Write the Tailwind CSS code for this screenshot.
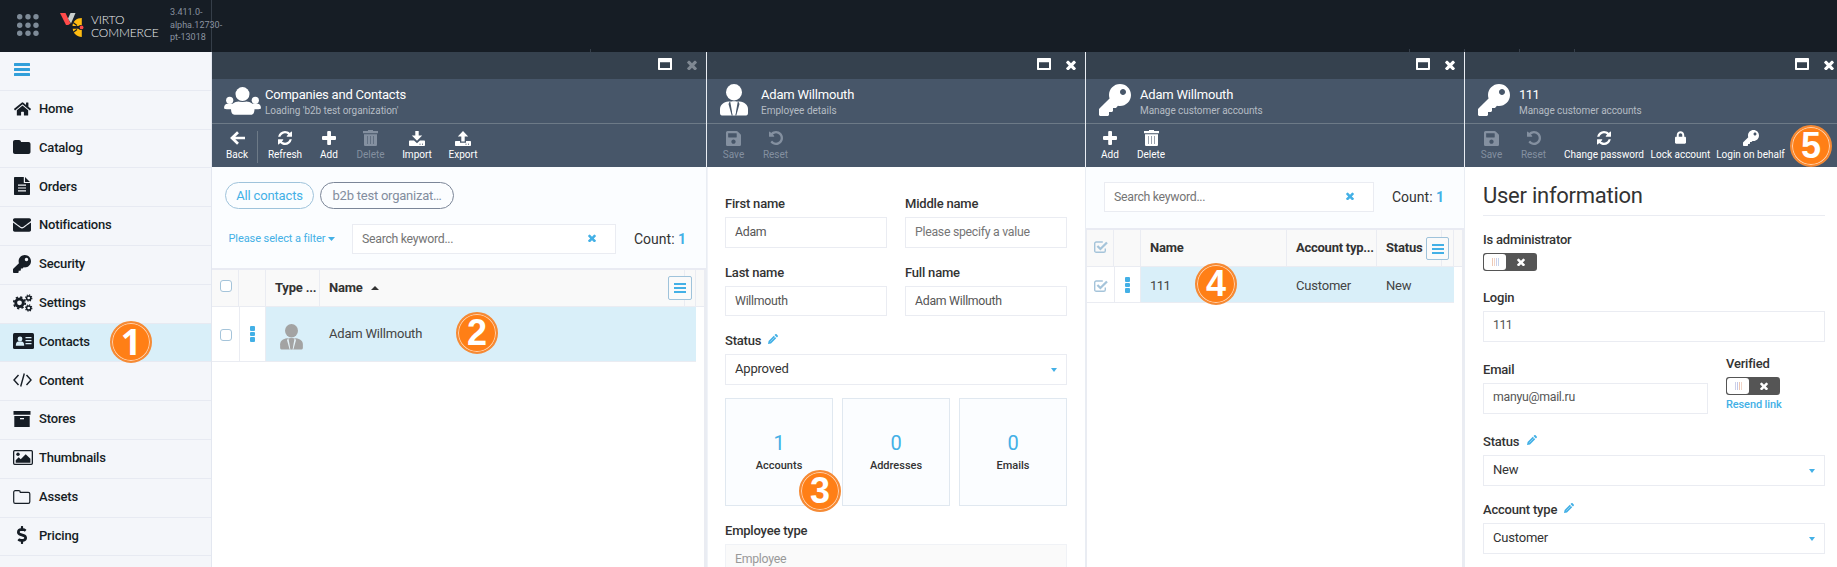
<!DOCTYPE html>
<html lang="en">
<head>
<meta charset="utf-8">
<title>Virto Commerce</title>
<script src="https://cdn.jsdelivr.net/npm/@tailwindcss/browser@4"></script>
</head>
<body class="relative flex h-[567px] w-[1837px] flex-col overflow-hidden bg-white font-['Roboto',sans-serif] text-[13px] text-[#333]">
<svg class="hidden" xmlns="http://www.w3.org/2000/svg">
<symbol id="key" viewBox="0 0 512 512"><path d="M512 176.001C512 273.203 433.202 352 336 352c-11.22 0-22.19-1.062-32.827-3.069l-24.012 27.014A23.999 23.999 0 0 1 261.223 384H224v40c0 13.255-10.745 24-24 24h-40v40c0 13.255-10.745 24-24 24H24c-13.255 0-24-10.745-24-24v-78.059c0-6.365 2.529-12.47 7.029-16.971l161.802-161.802C163.108 213.814 160 195.271 160 176 160 78.798 238.797.001 335.999 0 433.488-.001 512 78.511 512 176.001zM336 128c0 26.51 21.49 48 48 48s48-21.49 48-48-21.49-48-48-48-48 21.49-48 48z"/></symbol>
<symbol id="refresh" viewBox="0 128 1536 1536"><path d="M1511 1056q0 5-1 7-64 268-268 434.5t-478 166.5q-146 0-282.5-55t-243.5-157l-129 129q-19 19-45 19t-45-19-19-45v-448q0-26 19-45t45-19h448q26 0 45 19t19 45-19 45l-137 137q71 66 161 102t187 36q134 0 250-65t186-179q11-17 53-117 8-23 30-23h192q13 0 22.5 9.5t9.5 22.5zm25-800v448q0 26-19 45t-45 19h-448q-26 0-45-19t-19-45 19-45l138-138q-148-137-349-137-134 0-250 65t-186 179q-11 17-53 117-8 23-30 23h-199q-13 0-22.5-9.5t-9.5-22.5v-7q65-268 270-434.5t480-166.5q146 0 284 55.5t245 156.5l130-129q19-19 45-19t45 19 19 45z"/></symbol>
<symbol id="undo" viewBox="128 128 1536 1536"><path d="M1664 896q0 156-61 298t-164 245-245 164-298 61q-172 0-327-72.5t-264-204.5q-7-10-6.5-22.5t8.5-20.5l137-138q10-9 25-9 16 2 23 12 73 95 179 147t225 52q104 0 198.5-40.5t163.5-109.5 109.5-163.5 40.5-198.5-40.5-198.5-109.5-163.5-163.5-109.5-198.5-40.5q-98 0-188 35.5t-160 101.5l137 138q31 30 14 69-17 40-59 40h-448q-26 0-45-19t-19-45v-448q0-42 40-59 39-17 69 14l130 129q107-101 244.5-156.5t284.5-55.5q156 0 298 61t245 164 164 245 61 298z"/></symbol>
<symbol id="times" viewBox="300 290 1192 1212"><path d="M1490 1322q0 40-28 68l-136 136q-28 28-68 28t-68-28l-294-294-294 294q-28 28-68 28t-68-28l-136-136q-28-28-28-68t28-68l294-294-294-294q-28-28-28-68t28-68l136-136q28-28 68-28t68 28l294 294 294-294q28-28 68-28t68 28l136 136q28 28 28 68t-28 68l-294 294 294 294q28 28 28 68z"/></symbol>
<symbol id="save" viewBox="0 32 448 448"><path d="M433.941 129.941l-83.882-83.882A48 48 0 0 0 316.118 32H48C21.49 32 0 53.49 0 80v352c0 26.51 21.49 48 48 48h352c26.51 0 48-21.49 48-48V163.882a48 48 0 0 0-14.059-33.941zM224 416c-35.346 0-64-28.654-64-64 0-35.346 28.654-64 64-64s64 28.654 64 64c0 35.346-28.654 64-64 64zm96-304.52V212c0 6.627-5.373 12-12 12H76c-6.627 0-12-5.373-12-12V108c0-6.627 5.373-12 12-12h228.52c3.183 0 6.235 1.264 8.485 3.515l3.48 3.48A11.996 11.996 0 0 1 320 111.48z"/></symbol>
<symbol id="mail" viewBox="0 64 512 384"><path d="M502.3 190.8c3.9-3.1 9.7-.2 9.7 4.7V400c0 26.5-21.5 48-48 48H48c-26.5 0-48-21.5-48-48V195.6c0-5 5.7-7.8 9.7-4.7 22.4 17.4 52.1 39.5 154.1 113.6 21.1 15.4 56.7 47.8 92.2 47.6 35.7.3 72-32.8 92.3-47.6 102-74.1 131.6-96.3 154-113.7zM256 320c23.2.4 56.6-29.2 73.4-41.4 132.7-96.3 142.8-104.7 173.4-128.7 5.8-4.5 9.2-11.5 9.2-18.9v-19c0-26.5-21.5-48-48-48H48c-26.5 0-48 21.5-48 48v19c0 7.4 3.4 14.3 9.2 18.9 30.6 23.9 40.7 32.4 173.4 128.7 16.8 12.2 50.2 41.8 73.4 41.4z"/></symbol>
<symbol id="lock" viewBox="0 0 448 512"><path d="M400 224h-24v-72C376 68.2 307.8 0 224 0S72 68.2 72 152v72H48c-26.5 0-48 21.5-48 48v192c0 26.5 21.5 48 48 48h352c26.5 0 48-21.5 48-48V272c0-26.5-21.5-48-48-48zm-104 0H152v-72c0-39.7 32.3-72 72-72s72 32.3 72 72v72z"/></symbol>
<symbol id="home" viewBox="0 32 576 448"><path d="M280.37 148.26L96 300.11V464a16 16 0 0 0 16 16l112.06-.29a16 16 0 0 0 15.92-16V368a16 16 0 0 1 16-16h64a16 16 0 0 1 16 16v95.64a16 16 0 0 0 16 16.05L464 480a16 16 0 0 0 16-16V300L295.67 148.26a12.19 12.19 0 0 0-15.3 0zM571.6 251.47L488 182.56V44.05a12 12 0 0 0-12-12h-56a12 12 0 0 0-12 12v72.61L318.47 43a48 48 0 0 0-61 0L4.34 251.47a12 12 0 0 0-1.6 16.9l25.5 31A12 12 0 0 0 45.15 301l235.22-193.74a12.19 12.19 0 0 1 15.3 0L530.9 301a12 12 0 0 0 16.9-1.6l25.5-31a12 12 0 0 0-1.7-16.93z"/></symbol>
<symbol id="dollar" viewBox="0 0 288 512"><path d="M209.2 233.4l-108-31.6C88.7 198.2 80 186.5 80 173.5c0-16.3 13.2-29.5 29.5-29.5h66.3c12.2 0 24.2 3.7 34.2 10.5 6.1 4.1 14.3 3.1 19.5-2l34.8-34c7.1-6.9 6.1-18.4-1.8-24.5C238 74.8 207.4 64.1 176 64V16c0-8.8-7.2-16-16-16h-32c-8.8 0-16 7.2-16 16v48h-2.5C45.8 64-5.4 118.7.5 183.6c4.2 46.1 39.4 83.6 83.8 96.6l102.5 30c12.5 3.7 21.2 15.3 21.2 28.3 0 16.3-13.2 29.5-29.5 29.5h-66.3C100 368 88 364.3 78 357.5c-6.1-4.1-14.3-3.1-19.5 2l-34.8 34c-7.1 6.9-6.1 18.4 1.8 24.5 24.5 19.2 55.1 29.9 86.5 30v48c0 8.8 7.2 16 16 16h32c8.8 0 16-7.2 16-16v-48.2c46.6-.9 90.3-28.6 105.7-72.7 21.5-61.6-14.6-124.8-72.5-141.7z"/></symbol>
<symbol id="user" viewBox="0 0 28 32"><ellipse cx="14" cy="8.300" rx="8" ry="8.200"/><path d="M0 29v-4c0-4 3.500-7 8.500-7.500h11c5 .5 8.500 3.500 8.500 7.500v4c0 2-1 2.500-3 2.500H3c-2 0-3-.5-3-2.500z"/><path d="M10.200 17.500l2.500 14h-1L8.500 20l1.200-2.500zM17.800 17.500l-2.500 14h1L19.500 20l-1.200-2.500z" class="fill-(--cut)"/><path d="M12 17.500h4l-1 2 .9 9-1.900 3-1.900-3 .9-9z"/></symbol>
<symbol id="users" viewBox="0 0 37 28"><circle cx="5.700" cy="13.300" r="3.600"/><circle cx="31.300" cy="13.300" r="3.600"/><path d="M0 21.500c0-2.800 1.300-4.700 3.600-4.700h5c2-1.600 4-2.300 6-2.300h7.800c2 0 4 .7 6 2.300h5c2.300 0 3.600 1.900 3.600 4.700-2 .8-5 .9-6.500.8-.2 3.400-1 5.500-3.500 5.500H10.500c-2.500 0-3.300-2.100-3.500-5.500-1.500.1-5 0-7-.8z"/><circle cx="18.500" cy="7.300" r="7.800" class="fill-[#475669]"/><circle cx="18.500" cy="7.100" r="7"/></symbol>
<symbol id="plus" viewBox="0 0 14 14"><rect x="5.200" width="3.800" height="14" rx="1"/><rect y="5.100" width="14" height="3.800" rx="1"/></symbol>
<symbol id="back" viewBox="0 0 15 14"><path d="M8 1.200L2 7l6 5.800M2.500 7H15" fill="none" stroke="currentColor" stroke-width="2.700"/></symbol>
<symbol id="trash" viewBox="0 0 15 16"><path d="M5 1V0h5v1h5v2.200H0V1zM1 4.200h13V14.500c0 1-.5 1.500-1.500 1.500h-10C1.500 16 1 15.500 1 14.500z"/><path d="M4.500 6v8M7.500 6v8M10.500 6v8" stroke="#475669" stroke-opacity=".55" stroke-width="1"/></symbol>
<symbol id="import" viewBox="0 0 16 15"><path d="M6.300 0h3.400v4.500h3.500L8 9.800 2.800 4.500h3.500z"/><path d="M1 9.500h4l3 2.800 3-2.800h4c.6 0 1 .4 1 1V14c0 .6-.4 1-1 1H1c-.6 0-1-.4-1-1v-3.500c0-.6.4-1 1-1z"/><path d="M10.500 13.200h1M13 13.200h1" stroke="#475669"/></symbol>
<symbol id="export" viewBox="0 0 16 15"><path d="M6.300 10.500h3.400V5.500h3.500L8 0 2.800 5.500h3.500z"/><path d="M1 10h4v1.700h6V10h4c.6 0 1 .4 1 1v3c0 .6-.4 1-1 1H1c-.6 0-1-.4-1-1v-3c0-.6.4-1 1-1z"/><path d="M10.500 13.200h1M13 13.200h1" stroke="#475669"/></symbol>
<symbol id="window" viewBox="0 0 14 12"><path fill-rule="evenodd" d="M1 0h12c.6 0 1 .4 1 1v10c0 .6-.4 1-1 1H1c-.6 0-1-.4-1-1V1c0-.6.4-1 1-1zm1 4.200v5.800h10V4.200z"/></symbol>
<symbol id="pencil" viewBox="0 0 10 10"><path d="M0 10l.6-3L5.800 1.800l2.400 2.400L3 9.400zM6.500 1.100L7.300.3c.4-.4.9-.4 1.300 0l1.100 1.100c.4.400.4.900 0 1.300l-.8.8z"/><path d="M2.300 7.700l4.400-4.400" stroke="#fff" stroke-width=".4"/></symbol>
<symbol id="check" viewBox="0 0 14 12"><path d="M11.300 7.500v2.200c0 1-.7 1.600-1.600 1.600H2.300C1.300 11.300.7 10.700.7 9.700V2.600C.7 1.600 1.300 1 2.300 1h6.500" fill="none" stroke="currentColor" stroke-width="1.400"/><path d="M3.400 5l3 3 6.600-6.500" fill="none" stroke="currentColor" stroke-width="2.300"/></symbol>
<symbol id="folder" viewBox="0 0 18 14"><path d="M0 2C0 .9.800 0 2 0h4c1.100 0 2 .9 2 2h7.500c1.100 0 2 .9 2 2v8c0 1.100-.9 2-2 2H2c-1.200 0-2-.9-2-2z"/></symbol>
<symbol id="folder-o" viewBox="0 0 18 14"><path d="M.7 2.200C.7 1.300 1.300.7 2.200.7h3.600c.9 0 1.500.6 1.500 1.600h8c.9 0 1.500.6 1.500 1.500v7.900c0 .9-.6 1.600-1.500 1.600H2.200c-.9 0-1.500-.7-1.500-1.600z" fill="none" stroke="currentColor" stroke-width="1.200"/></symbol>
<symbol id="file" viewBox="0 0 16 18"><path d="M1 0h8.800v6H16v11c0 .6-.4 1-1 1H1c-.6 0-1-.4-1-1V1c0-.6.4-1 1-1zM11 0l5 4.900h-5z"/><path d="M4 8.200h8M4 11h8M4 13.800h8" stroke="#f4f6fa" stroke-width="1.200"/></symbol>
<symbol id="gears" viewBox="0 0 20 18"><circle cx="6.500" cy="8.800" r="3.800" fill="none" stroke="currentColor" stroke-width="2.800"/><circle cx="6.500" cy="8.800" r="5.700" fill="none" stroke="currentColor" stroke-width="1.800" stroke-dasharray="2.200 2.277"/><g fill="none" stroke="currentColor"><circle cx="15.700" cy="4" r="2.100" stroke-width="1.500"/><circle cx="15.700" cy="4" r="3.100" stroke-width="1.200" stroke-dasharray="1.200 1.235"/><circle cx="15.700" cy="14" r="2.100" stroke-width="1.500"/><circle cx="15.700" cy="14" r="3.100" stroke-width="1.200" stroke-dasharray="1.200 1.235"/></g></symbol>
<symbol id="card" viewBox="0 0 21 16"><rect width="21" height="16" rx="1.500"/><g fill="#d9eff9"><circle cx="7" cy="6" r="2.400"/><path d="M2.800 12.800c0-3 1.200-4.200 2.600-4.200h3.200c1.400 0 2.600 1.200 2.600 4.200z"/><path d="M12.500 4h6v1.200h-6zM12.500 7h6v1.200h-6zM12.500 10h6v1.200h-6z"/></g></symbol>
<symbol id="code" viewBox="0 0 19 14"><path d="M5.500 2L1 7l4.500 5M13.500 2L18 7l-4.500 5M11.300.5L7.700 13.500" fill="none" stroke="currentColor" stroke-width="1.400"/></symbol>
<symbol id="archive" viewBox="0 0 18 16"><path d="M.5 0h17v3.700H.5zM1.300 5h15.400v11H1.300z"/><path d="M7 7h4v1.300H7z" fill="#f4f6fa"/></symbol>
<symbol id="image" viewBox="0 0 20 15"><rect x=".65" y=".65" width="18.700" height="13.700" rx="1" fill="none" stroke="currentColor" stroke-width="1.300"/><circle cx="5" cy="4.300" r="1.700"/><path d="M2.700 12.700v-2.500l3-3 2 2 5-5 4.700 4.600v3.900z"/></symbol>
</svg>

<!-- Top bar -->
<header class="relative flex h-[52px] shrink-0 bg-[#161d25]">
  <div class="flex w-[212px] shrink-0 border-r border-[#353e49]">
    <svg class="ml-[17px] mt-[13.500px] size-[22px] shrink-0 fill-[#7e8b98]" viewBox="0 0 22 22"><circle cx="2.700" cy="2.700" r="2.700"/><circle cx="11" cy="2.700" r="2.700"/><circle cx="19" cy="2.700" r="2.700"/><circle cx="2.700" cy="11.200" r="2.700"/><circle cx="11" cy="11.200" r="2.700"/><circle cx="19" cy="11.200" r="2.700"/><circle cx="2.700" cy="19.300" r="2.700"/><circle cx="11" cy="19.300" r="2.700"/><circle cx="19" cy="19.300" r="2.700"/></svg>
    <svg class="ml-[21px] mt-[13px] h-6 w-6 shrink-0" viewBox="0 0 24 24"><path d="M0 0h5.500l5 10.500L8.200 12H6z" fill="#ff4a4a"/><path d="M10.500 0h5L11 10.500 8 5.500z" fill="#c9cfcd"/><path d="M21.800 5v7a4 4 0 0 0-3.500 1H12.500c.3-4.500 4-8 9.300-8z" fill="#ffbc11"/><path d="M12.700 15.800h5.600a4 4 0 0 0 3.500 1.200V24c-5 0-8.500-3.500-9.100-8.200z" fill="#ffbc11"/><path d="M13 9.500l4 3M13 19.500l4-3" stroke="#161d25" stroke-width="1.200"/><circle cx="21.600" cy="14.400" r="1.900" fill="#ff4a4a"/></svg>
    <div class="ml-[7px] mt-[12.500px] w-[70px] shrink-0 font-['Lato',sans-serif] text-[12px] leading-[13px] font-light tracking-[-0.120px] text-[#eceef0]">VIRTO<br>COMMERCE</div>
    <div class="ml-[9px] mt-[6px] shrink-0 text-[9px] leading-[12.500px] whitespace-nowrap text-[#8a93a0]">3.411.0-<br>alpha.12730-<br>pt-13018</div>
  </div>
  <i class="absolute bottom-0 left-[590px] h-[3px] w-px bg-[#353e49]"></i>
  <i class="absolute bottom-0 left-[1409px] h-[3px] w-px bg-[#353e49]"></i>
  <i class="absolute bottom-0 left-[1464px] h-[3px] w-px bg-[#353e49]"></i>
  <i class="absolute bottom-0 left-[1519px] h-[3px] w-px bg-[#353e49]"></i>
  <i class="absolute bottom-0 left-[1574px] h-[3px] w-px bg-[#353e49]"></i>
</header>

<div class="flex h-[515px]">
<!-- Main menu -->
<nav class="flex w-[212px] shrink-0 flex-col border-r border-[#e3e7f0] bg-[#f4f6fa] font-medium tracking-[-0.180px] text-[#161d25] *:flex *:h-[38.800px] *:shrink-0 *:items-center *:border-b *:border-[#e7eaf2] *:pb-[2px] [&_svg]:fill-current [&_span]:flex [&_span]:w-[39px] [&_span]:shrink-0 [&_span]:pl-[13px]">
  <div><svg class="ml-[14px] mt-[-1px] h-[13px] w-4 text-[#319fda]" viewBox="0 0 16 13"><rect width="16" height="3" rx=".5"/><rect y="5" width="16" height="3" rx=".5"/><rect y="10" width="16" height="3" rx=".5"/></svg></div>
  <div><span><svg class="ml-px h-[14px] w-[17px]"><use href="#home"/></svg></span>Home</div>
  <div><span><svg class="h-[14px] w-[18px]"><use href="#folder"/></svg></span>Catalog</div>
  <div><span><svg class="ml-px h-[18px] w-4"><use href="#file"/></svg></span>Orders</div>
  <div><span><svg class="h-[14px] w-[18px]"><use href="#mail"/></svg></span>Notifications</div>
  <div><span><svg class="size-[18px]"><use href="#key"/></svg></span>Security</div>
  <div><span><svg class="h-[18px] w-5"><use href="#gears"/></svg></span>Settings</div>
  <div class="bg-[#d9eff9]"><span><svg class="h-4 w-[21px]"><use href="#card"/></svg></span>Contacts</div>
  <div><span><svg class="h-[14px] w-[19px]"><use href="#code"/></svg></span>Content</div>
  <div><span><svg class="h-4 w-[18px]"><use href="#archive"/></svg></span>Stores</div>
  <div><span><svg class="h-[15px] w-5"><use href="#image"/></svg></span>Thumbnails</div>
  <div><span><svg class="h-[14px] w-[18px]"><use href="#folder-o"/></svg></span>Assets</div>
  <div><span><svg class="ml-1 h-[18px] w-[10px]"><use href="#dollar"/></svg></span>Pricing</div>
  <div></div>
</nav>

<!-- Companies and Contacts -->
<section class="flex w-[495px] shrink-0 flex-col border-r border-[#e9edf3]">
  <div class="flex h-[27px] shrink-0 items-start justify-end bg-[#35414e] fill-white pt-[6px]"><svg class="mr-[15px] h-3 w-[14px]"><use href="#window"/></svg><svg class="mt-[2px] mr-[9px] size-[10px] fill-[#7f8892]"><use href="#times"/></svg></div>
  <div class="flex h-[45px] shrink-0 border-b border-[#6d7a87] bg-[#475669]">
    <svg class="mt-2 ml-3 h-7 w-[37px] fill-white"><use href="#users"/></svg>
    <div class="ml-1 pt-2"><div class="h-4 leading-4 tracking-[-0.220px] text-white">Companies and Contacts</div><div class="mt-px h-[14px] text-[10px] leading-[14px] tracking-[-0.060px] text-[#b5bcc4]">Loading 'b2b test organization'</div></div>
  </div>
  <div class="flex h-[43px] shrink-0 bg-[#475669] fill-white pt-[6px] text-[10px] leading-[14px] text-white *:flex *:h-8 *:flex-col *:items-center [&_b]:mb-[2px] [&_b]:flex [&_b]:h-4 [&_b]:items-center [&_b]:font-normal">
    <div class="ml-[5px] w-[40px]"><b><svg class="h-[14px] w-[15px] text-white"><use href="#back"/></svg></b>Back</div>
    <div class="mr-[1px] mt-px h-[30px] w-px bg-[#6d7a87]"></div>
    <div class="w-[52px]"><b><svg class="size-[14px]"><use href="#refresh"/></svg></b>Refresh</div>
    <div class="w-9"><b><svg class="size-[14px]"><use href="#plus"/></svg></b>Add</div>
    <div class="w-[47px] fill-[#8490a0] text-[#8490a0]"><b><svg class="h-4 w-[15px]"><use href="#trash"/></svg></b>Delete</div>
    <div class="w-[46px]"><b><svg class="h-[15px] w-4"><use href="#import"/></svg></b>Import</div>
    <div class="w-[46px]"><b><svg class="h-[15px] w-4"><use href="#export"/></svg></b>Export</div>
  </div>
  <div class="flex h-[103px] shrink-0 flex-col border-b-2 border-[#e9ebf3] bg-[#fbfdff]">
    <div class="mt-[15px] ml-[13px] flex h-[27px] gap-[6px] text-[13px]">
      <div class="flex w-[89px] items-center justify-center rounded-full border border-[#9fc3db] tracking-[-0.150px] text-[#43b0e6]">All contacts</div>
      <div class="flex w-[134px] items-center justify-center rounded-full border border-[#7b8698] tracking-[-0.230px] text-[#838d9e]">b2b test organizat…</div>
    </div>
    <div class="mt-[15px] flex h-[30px] items-center">
      <div class="ml-[16.500px] flex h-7 w-[123.500px] items-center gap-[3px] text-[11px] tracking-[-0.090px] text-[#43b0e6]">Please select a filter<svg class="h-[4px] w-[7px] fill-current" viewBox="0 0 7 4"><path d="M0 0h7L3.500 4z"/></svg></div>
      <div class="flex h-[30px] w-[264px] items-center justify-between border border-[#eaecf2] bg-white pr-[19px] pl-[9px] text-[12.300px] tracking-[-0.290px] text-[#757575]">Search keyword...<svg class="mt-[-2px] size-2 fill-[#43b0e6]"><use href="#times"/></svg></div>
      <div class="ml-[18px] text-[14px]">Count: <b class="font-bold text-[#43b0e6]">1</b></div>
    </div>
  </div>
  <div class="flex h-[37px] shrink-0 border-b border-r-2 border-[#eaecf2] bg-[#f9f9f9] font-bold tracking-[-0.200px]">
    <div class="flex w-[27px] border-r border-[#eaecf2]"><i class="mt-[10px] ml-2 size-3 rounded-[3px] border border-[#a5c4da] bg-white"></i></div>
    <div class="w-[27px] border-r border-[#eaecf2]"></div>
    <div class="flex w-[54px] items-center border-r border-[#eaecf2] pl-[9px] whitespace-nowrap">Type ...</div>
    <div class="relative flex w-[365px] items-center border-r border-[#eaecf2] pl-[9px]">Name<svg class="ml-2 h-[4px] w-2 fill-[#333]" viewBox="0 0 8 4"><path d="M0 4h8L4 0z"/></svg>
      <div class="absolute top-[6px] right-[-8px] flex size-6 flex-col items-center justify-center gap-[2px] rounded-[2px] border border-[#9fc3db] bg-[#fafafa] *:h-[2px] *:w-3 *:bg-[#43b0e6]"><i></i><i></i><i></i></div></div>
    <div class="w-[11px] border-r border-[#eaecf2]"></div>
  </div>
  <div class="flex grow border-r-2 border-[#eaecf2]">
    <div class="flex h-[55px] w-[484px] border-b border-[#eaecf2]">
      <div class="flex w-7 border-r border-[#eaecf2]"><i class="mt-[22px] ml-2 size-3 rounded-[3px] border border-[#a5c4da] bg-white"></i></div>
      <div class="flex w-[26px] flex-col items-center gap-px border-r border-[#eaecf2] pt-[19px] *:h-[4.500px] *:w-[5px] *:rounded-[1px] *:bg-[#43b0e6]"><i></i><i></i><i></i></div>
      <div class="flex grow bg-[#d9eff9]"><svg class="mt-[17px] ml-[14px] h-[26px] w-[23px] fill-[#a3a3a3] [--cut:#e4f2f8]"><use href="#user"/></svg><span class="ml-[26px] mt-[19px] leading-4 tracking-[-0.200px] text-[#444]">Adam Willmouth</span></div>
    </div>
  </div>
</section>

<!-- Employee details -->
<section class="flex w-[379px] shrink-0 flex-col border-r border-[#e9edf3]">
  <div class="flex h-[27px] shrink-0 items-start justify-end bg-[#35414e] fill-white pt-[6px]"><svg class="mr-[15px] h-3 w-[14px]"><use href="#window"/></svg><svg class="mt-[2px] mr-[9px] size-[10px]"><use href="#times"/></svg></div>
  <div class="flex h-[45px] shrink-0 border-b border-[#6d7a87] bg-[#475669]">
    <svg class="mt-[5px] ml-[13px] h-8 w-7 fill-white [--cut:#475669]"><use href="#user"/></svg>
    <div class="ml-[13px] pt-2"><div class="h-4 leading-4 tracking-[-0.200px] text-white">Adam Willmouth</div><div class="mt-px h-[14px] text-[10px] leading-[14px] text-[#b5bcc4]">Employee details</div></div>
  </div>
  <div class="flex h-[43px] shrink-0 bg-[#475669] fill-[#8490a0] pt-[6px] text-[10px] leading-[14px] text-[#8490a0] *:flex *:h-8 *:flex-col *:items-center [&_b]:mb-[2px] [&_b]:flex [&_b]:h-4 [&_b]:items-center">
    <div class="ml-[6px] w-[41px]"><b><svg class="size-[15px]"><use href="#save"/></svg></b>Save</div>
    <div class="w-[43px]"><b><svg class="size-[14px]"><use href="#undo"/></svg></b>Reset</div>
  </div>
  <div class="flex grow flex-col border-l border-[#f1f3f8] pt-[29px] pr-[17px] pl-[17px]">
    <div class="grid grid-cols-[162px_162px] gap-x-[18px] font-medium tracking-[-0.200px] [&_p]:flex [&_p]:items-center [&_p]:border [&_p]:border-[#eaecf2] [&_p]:pl-[9px] [&_p]:text-[12.300px] [&_p]:font-normal [&_p]:tracking-[-0.280px] [&_p]:text-[#555]">
      <div><div class="h-[21px] leading-4">First name</div><p class="h-[31px]">Adam</p></div>
      <div><div class="h-[21px] leading-4">Middle name</div><p class="h-[31px]"><span class="text-[#757575]">Please specify a value</span></p></div>
      <div class="mt-[17px]"><div class="h-[21px] leading-4">Last name</div><p class="h-[30px]">Willmouth</p></div>
      <div class="mt-[17px]"><div class="h-[21px] leading-4">Full name</div><p class="h-[30px]">Adam Willmouth</p></div>
    </div>
    <div class="mt-[17px] flex h-[21px] gap-[7px] leading-4 font-medium tracking-[-0.200px]">Status<svg class="mt-px size-[10px] fill-[#43b0e6]"><use href="#pencil"/></svg></div>
    <div class="flex h-[31px] w-[342px] items-center justify-between border border-[#eaecf2] pr-[9px] pl-[9px] tracking-[-0.200px] text-[#333]"><span class="mt-[-1px]">Approved</span><svg class="h-1 w-[6px] fill-[#43b0e6]" viewBox="0 0 6 4"><path d="M0 0h6L3 4z"/></svg></div>
    <div class="mt-[13px] flex h-[108px] w-[342px] justify-between *:flex *:w-[108px] *:flex-col *:items-center *:border *:border-[#e0e8f0] *:bg-[#fbfdff] *:text-[11px] *:leading-4 *:font-medium *:text-[#333] [&_b]:mt-[34px] [&_b]:mb-[5px] [&_b]:text-[20px] [&_b]:leading-5 [&_b]:font-normal [&_b]:text-[#43b0e6]">
      <div><b>1</b>Accounts</div><div><b>0</b>Addresses</div><div><b>0</b>Emails</div>
    </div>
    <div class="mt-[17px] h-[21px] leading-4 font-medium tracking-[-0.200px]">Employee type</div>
    <div class="flex h-[31px] w-[342px] shrink-0 items-center border border-[#f0f2f6] bg-[#fafafa] pl-[9px] text-[12.300px] tracking-[-0.280px] text-[#999]">Employee</div>
  </div>
</section>

<!-- Accounts list -->
<section class="flex w-[379px] shrink-0 flex-col border-r border-[#e9edf3]">
  <div class="flex h-[27px] shrink-0 items-start justify-end bg-[#35414e] fill-white pt-[6px]"><svg class="mr-[15px] h-3 w-[14px]"><use href="#window"/></svg><svg class="mt-[2px] mr-[9px] size-[10px]"><use href="#times"/></svg></div>
  <div class="flex h-[45px] shrink-0 border-b border-[#6d7a87] bg-[#475669]">
    <svg class="mt-[5px] ml-[13px] size-8 fill-white"><use href="#key"/></svg>
    <div class="ml-[9px] pt-2"><div class="h-4 leading-4 tracking-[-0.200px] text-white">Adam Willmouth</div><div class="mt-px h-[14px] text-[10px] leading-[14px] tracking-[-0.070px] text-[#b5bcc4]">Manage customer accounts</div></div>
  </div>
  <div class="flex h-[43px] shrink-0 bg-[#475669] fill-white pt-[6px] text-[10px] leading-[14px] text-white *:flex *:h-8 *:flex-col *:items-center [&_b]:mb-[2px] [&_b]:flex [&_b]:h-4 [&_b]:items-center">
    <div class="ml-[6px] w-9"><b><svg class="size-[14px]"><use href="#plus"/></svg></b>Add</div>
    <div class="w-[46px]"><b><svg class="h-4 w-[15px]"><use href="#trash"/></svg></b>Delete</div>
  </div>
  <div class="flex h-[63px] shrink-0 border-b-2 border-[#e9ebf3] bg-[#fbfdff] pt-[15px]">
    <div class="ml-[18px] flex h-[30px] w-[270px] items-center justify-between border border-[#eaecf2] bg-white pr-[19px] pl-[9px] text-[12.300px] tracking-[-0.290px] text-[#757575]">Search keyword...<svg class="mt-[-2px] size-2 fill-[#43b0e6]"><use href="#times"/></svg></div>
    <div class="ml-[18px] text-[14px] leading-[30px]">Count: <b class="font-bold text-[#43b0e6]">1</b></div>
  </div>
  <div class="flex h-[37px] shrink-0 border-b border-r-2 border-l border-[#eaecf2] bg-[#f9f9f9] font-bold tracking-[-0.200px] *:border-r *:border-[#eaecf2]">
    <div class="flex w-[27px] pt-[11px] pl-[7px]"><svg class="h-3 w-[14px] text-[#a5c4da]"><use href="#check"/></svg></div>
    <div class="w-[27px]"></div>
    <div class="flex w-[146px] items-center pl-[9px]">Name</div>
    <div class="flex w-[90px] items-center pl-[9px] tracking-[-0.250px] whitespace-nowrap">Account typ...</div>
    <div class="relative flex w-[65px] items-center pl-[9px]">Status
      <div class="absolute top-[7px] right-[-8px] flex h-[23px] w-[23px] flex-col items-center justify-center gap-[2px] rounded-[2px] border border-[#9fc3db] bg-[#fafafa] *:h-[2px] *:w-3 *:bg-[#43b0e6]"><i></i><i></i><i></i></div></div>
    <div class="w-[12px]"></div>
  </div>
  <div class="flex grow border-r-2 border-l border-[#eaecf2]">
    <div class="flex h-9 w-[367px] border-b border-[#eaecf2] text-[#444]">
      <div class="flex w-7 border-r border-[#eaecf2] pt-[13px] pl-[7px]"><svg class="h-3 w-[14px] text-[#a5c4da]"><use href="#check"/></svg></div>
      <div class="flex w-[26px] flex-col items-center gap-px border-r border-[#eaecf2] pt-[10px] *:h-[4.500px] *:w-[5px] *:rounded-[1px] *:bg-[#43b0e6]"><i></i><i></i><i></i></div>
      <div class="flex grow bg-[#d9eff9] leading-[38px]"><span class="w-[146px] pl-[9px] tracking-[-0.500px]">111</span><span class="w-[90px] pl-[9px] tracking-[-0.200px]">Customer</span><span class="pl-[9px] tracking-[-0.200px]">New</span></div>
    </div>
  </div>
</section>

<!-- Account details -->
<section class="flex w-[372px] shrink-0 flex-col">
  <div class="flex h-[27px] shrink-0 items-start justify-end bg-[#35414e] fill-white pt-[6px]"><svg class="mr-[15px] h-3 w-[14px]"><use href="#window"/></svg><svg class="mt-[2px] mr-[3px] size-[10px]"><use href="#times"/></svg></div>
  <div class="flex h-[45px] shrink-0 border-b border-[#6d7a87] bg-[#475669]">
    <svg class="mt-[5px] ml-[13px] size-8 fill-white"><use href="#key"/></svg>
    <div class="ml-[9px] pt-2"><div class="h-4 leading-4 tracking-[-0.500px] text-white">111</div><div class="mt-px h-[14px] text-[10px] leading-[14px] tracking-[-0.070px] text-[#b5bcc4]">Manage customer accounts</div></div>
  </div>
  <div class="flex h-[43px] shrink-0 bg-[#475669] fill-white pt-[6px] text-[10px] leading-[14px] whitespace-nowrap text-white *:flex *:h-8 *:flex-col *:items-center [&_b]:mb-[2px] [&_b]:flex [&_b]:h-4 [&_b]:items-center">
    <div class="ml-[6px] w-[41px] fill-[#8490a0] text-[#8490a0]"><b><svg class="size-[15px]"><use href="#save"/></svg></b>Save</div>
    <div class="w-[43px] fill-[#8490a0] text-[#8490a0]"><b><svg class="size-[14px]"><use href="#undo"/></svg></b>Reset</div>
    <div class="ml-[5px] w-[88px]"><b><svg class="size-[14px]"><use href="#refresh"/></svg></b>Change password</div>
    <div class="w-[65px]"><b><svg class="mb-px h-[13px] w-[11px]"><use href="#lock"/></svg></b>Lock account</div>
    <div class="w-[75px]"><b><svg class="size-4"><use href="#key"/></svg></b>Login on behalf</div>
  </div>
  <div class="ml-[18px] flex w-[342px] flex-col font-medium tracking-[-0.200px] [&_p]:flex [&_p]:h-[31px] [&_p]:items-center [&_p]:justify-between [&_p]:border [&_p]:border-[#eaecf2] [&_p]:px-[9px] [&_p]:font-normal">
    <div class="h-[49px] border-b border-[#eaecf2] pt-[15px] text-[22px] leading-[27px] font-normal tracking-[-0.260px]">User information</div>
    <div class="mt-4 h-[21px] leading-4">Is administrator</div>
    <div class="flex h-[18px] w-[54px] rounded-[3px] bg-[#555] p-px"><div class="flex w-[22px] items-center justify-center gap-px rounded-[3px] bg-white *:h-2 *:w-px"><i class="bg-[#ecc8b4]"></i><i class="bg-[#f0d5c8]"></i><i class="bg-[#ccd0e8]"></i><i class="bg-[#c4d4ee]"></i></div><svg class="mt-[4px] ml-[11px] size-2 fill-white"><use href="#times"/></svg></div>
    <div class="mt-[19px] h-[21px] leading-4">Login</div>
    <p class="text-[12.300px] tracking-[-0.500px] text-[#555]"><span class="mt-[-2px]">111</span></p>
    <div class="flex justify-between">
      <div class="mt-[20px] w-[225px]"><div class="h-[21px] leading-4">Email</div><p class="text-[12.300px] tracking-[-0.280px] text-[#555]"><span class="mt-[-2px]">manyu@mail.ru</span></p></div>
      <div class="mt-[14px] w-[99px]"><div class="h-[21px] leading-4">Verified</div>
        <div class="flex h-[18px] w-[54px] rounded-[3px] bg-[#555] p-px"><div class="flex w-[22px] items-center justify-center gap-px rounded-[3px] bg-white *:h-2 *:w-px"><i class="bg-[#ccd0e8]"></i><i class="bg-[#c4c8ea]"></i><i class="bg-[#ecc8b4]"></i><i class="bg-[#f0d5c8]"></i></div><svg class="mt-[4px] ml-[11px] size-2 fill-white"><use href="#times"/></svg></div>
        <div class="mt-[2px] text-[11px] leading-[15px] tracking-[-0.120px] text-[#43b0e6]">Resend link</div></div>
    </div>
    <div class="mt-[20px] flex h-[21px] gap-2 leading-4">Status<svg class="mt-px size-[10px] fill-[#43b0e6]"><use href="#pencil"/></svg></div>
    <p><span class="mt-[-1px]">New</span><svg class="h-1 w-[6px] fill-[#43b0e6]" viewBox="0 0 6 4"><path d="M0 0h6L3 4z"/></svg></p>
    <div class="mt-4 flex h-[21px] gap-[7px] leading-4">Account type<svg class="mt-px size-[10px] fill-[#43b0e6]"><use href="#pencil"/></svg></div>
    <p><span class="mt-[-1px]">Customer</span><svg class="h-1 w-[6px] fill-[#43b0e6]" viewBox="0 0 6 4"><path d="M0 0h6L3 4z"/></svg></p>
  </div>
</section>
</div>

<!-- Numbered step markers -->
<div class="font-['Liberation_Sans',sans-serif] text-[36px] leading-9 font-bold text-white *:absolute *:flex *:size-[42px] *:items-center *:justify-center *:rounded-full *:border-2 *:border-[#f58a35] *:bg-[#ff7f16] *:shadow-[inset_0_0_0_1px_#ffd3b0]">
  <div class="top-[321px] left-[110px] font-['Open_Sans']">1</div>
  <div class="top-[312px] left-[456px]">2</div>
  <div class="top-[470px] left-[799px] size-[44px]">3</div>
  <div class="top-[263px] left-[1195px]">4</div>
  <div class="top-[125px] left-[1790px]">5</div>
</div>
</body>
</html>
